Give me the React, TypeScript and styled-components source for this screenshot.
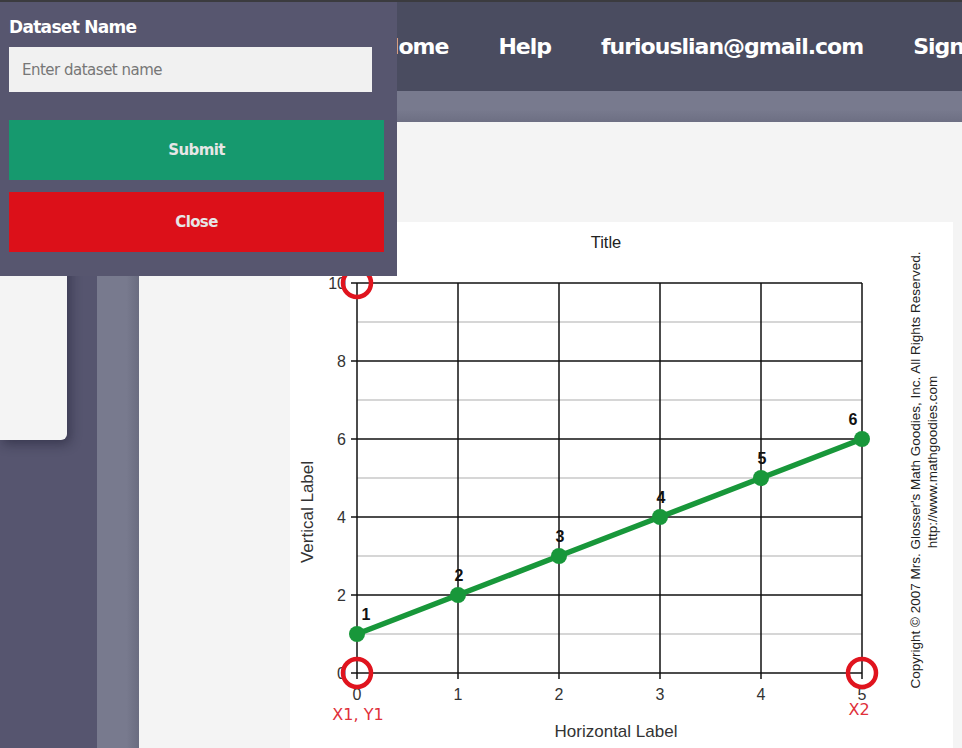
import React from "react";
import styled, { createGlobalStyle } from "styled-components";

const Global = createGlobalStyle`
  html, body { margin: 0; padding: 0; height: 100%; overflow: hidden; }
  body { font-family: "DejaVu Sans", "Liberation Sans", sans-serif; background: #f4f4f4; }
  #root { height: 100%; }
`;

const Page = styled.div`
  position: relative;
  display: flex;
  flex-direction: column;
  width: 962px;
  height: 748px;
  overflow: hidden;
`;

const NavBar = styled.nav`
  flex: 0 0 89px;
  display: flex;
  align-items: center;
  gap: 50px;
  padding-left: 381px;
  background: #4a4c60;
  border-top: 2px solid #3b3b3f;
  white-space: nowrap;
  overflow: hidden;
`;

const NavItem = styled.span`
  color: #ffffff;
  font-family: "DejaVu Sans", sans-serif;
  font-weight: 700;
  font-size: 22px;
  letter-spacing: -1px;
`;

const SubBar = styled.div`
  flex: 0 0 31px;
  background: linear-gradient(to bottom, #787a8e 0%, #787a8e 60%, #6d6f83 100%);
`;

const Body = styled.div`
  flex: 1;
  display: flex;
  min-height: 0;
`;

const Sidebar = styled.aside`
  flex: 0 0 97px;
  background: #56556f;
  padding-top: 10px;
`;

const SideCard = styled.div`
  width: 67px;
  height: 308px;
  background: #f4f4f4;
  border-radius: 0 0 6px 0;
  box-shadow: 3px 4px 12px rgba(20, 20, 40, 0.45);
`;

const Shade = styled.div`
  flex: 0 0 42px;
  background: linear-gradient(to right, #787a8e 0%, #787a8e 70%, #6a6c80 100%);
`;

const Content = styled.main`
  flex: 1;
  background: #f4f4f4;
  padding: 100px 9px 0 151px;
`;

const ChartSheet = styled.div`
  width: 663px;
  height: 526px;
  background: #ffffff;
`;

const Popup = styled.div`
  position: absolute;
  left: 0;
  top: 2px;
  width: 397px;
  height: 274px;
  box-sizing: border-box;
  background: #57566f;
  padding: 14px 13px 0 9px;
  display: flex;
  flex-direction: column;
`;

const PopupLabel = styled.label`
  color: #ffffff;
  font-family: "DejaVu Sans", sans-serif;
  font-weight: 700;
  font-size: 17px;
  letter-spacing: -0.7px;
  line-height: 22px;
  margin-bottom: 9px;
`;

const NameInput = styled.input`
  width: 363px;
  height: 45px;
  box-sizing: border-box;
  border: none;
  outline: none;
  background: #f1f1f1;
  padding: 0 13px;
  font-family: "DejaVu Sans", sans-serif;
  font-size: 15px;
  letter-spacing: -0.5px;
  color: #333;
  margin-bottom: 28px;
  &::placeholder { color: #777777; }
`;

const ActionButton = styled.button<{ $tone: "ok" | "danger" }>`
  width: 375px;
  height: 60px;
  border: none;
  margin-bottom: 12px;
  background: ${(p) => (p.$tone === "ok" ? "#16996e" : "#dc1019")};
  color: #e6e6e6;
  font-family: "DejaVu Sans", sans-serif;
  font-weight: 700;
  font-size: 15px;
  letter-spacing: -0.6px;
  cursor: pointer;
`;

const X0 = 67;
const Y0 = 451;
const DX = 101;
const DY = 39;
const xp = (v: number) => X0 + v * DX;
const yp = (v: number) => Y0 - v * DY;

const points = [1, 2, 3, 4, 5, 6].map((y, i) => ({ x: i, y, label: String(y) }));

function Chart() {
  const f = "'Liberation Sans', Arial, sans-serif";
  return (
    <svg width="663" height="526" viewBox="0 0 663 526">
      <text x="316" y="26" textAnchor="middle" fontFamily={f} fontSize="16.5" fill="#222">Title</text>
      {[1, 3, 5, 7, 9].map((v) => (
        <line key={"m" + v} x1={xp(0)} x2={xp(5)} y1={yp(v)} y2={yp(v)} stroke="#c8c8c8" strokeWidth="1.5" />
      ))}
      {[0, 2, 4, 6, 8, 10].map((v) => (
        <g key={"h" + v}>
          <line x1={xp(0) - 6} x2={xp(5)} y1={yp(v)} y2={yp(v)} stroke="#111" strokeWidth="1.5" />
          <text x={xp(0) - 11} y={yp(v) + 6} textAnchor="end" fontFamily={f} fontSize="16" fill="#333">{v}</text>
        </g>
      ))}
      {[0, 1, 2, 3, 4, 5].map((v) => (
        <g key={"v" + v}>
          <line x1={xp(v)} x2={xp(v)} y1={yp(10)} y2={yp(0) + 6} stroke="#111" strokeWidth="1.5" />
          <text x={xp(v)} y={yp(0) + 27} textAnchor="middle" fontFamily={f} fontSize="16" fill="#333">{v}</text>
        </g>
      ))}
      <polyline
        points={points.map((p) => `${xp(p.x)},${yp(p.y)}`).join(" ")}
        fill="none"
        stroke="#18973a"
        strokeWidth="5.5"
        strokeLinejoin="round"
      />
      {points.map((p) => (
        <g key={"p" + p.x}>
          <circle cx={xp(p.x)} cy={yp(p.y)} r="8" fill="#18973a" />
          <text
            x={p.x === 0 ? xp(0) + 9 : p.x === 5 ? xp(5) - 9 : xp(p.x) + 1}
            y={yp(p.y) - 14}
            textAnchor="middle"
            fontFamily={f}
            fontWeight="700"
            fontSize="16"
            fill="#111"
          >
            {p.label}
          </text>
        </g>
      ))}
      <text
        transform={`translate(23 290) rotate(-90)`}
        textAnchor="middle"
        fontFamily={f}
        fontSize="17"
        fill="#333"
      >
        Vertical Label
      </text>
      <text x="326" y="515" textAnchor="middle" fontFamily={f} fontSize="17" fill="#333">Horizontal Label</text>
      <text transform="translate(630 248) rotate(-90)" textAnchor="middle" fontFamily={f} fontSize="13.5" fill="#222">
        Copyright © 2007 Mrs. Glosser's Math Goodies, Inc. All Rights Reserved.
      </text>
      <text transform="translate(647 240) rotate(-90)" textAnchor="middle" fontFamily={f} fontSize="13.5" fill="#222">
        http://www.mathgoodies.com
      </text>
      {[
        [xp(0), yp(10)],
        [xp(0), yp(0)],
        [xp(5), yp(0)],
      ].map(([cx, cy], i) => (
        <circle key={"r" + i} cx={cx} cy={cy} r="14" fill="none" stroke="#e0141e" strokeWidth="4.5" />
      ))}
      <text x={xp(0) + 1} y="498" textAnchor="middle" fontFamily="'DejaVu Sans', sans-serif" fontSize="16" fill="#e0303a">X1, Y1</text>
      <text x={xp(5) - 3} y="493" textAnchor="middle" fontFamily="'DejaVu Sans', sans-serif" fontSize="16" fill="#e0303a">X2</text>
    </svg>
  );
}

export default function App() {
  return (
    <>
      <Global />
      <Page>
        <NavBar>
          <NavItem>Home</NavItem>
          <NavItem>Help</NavItem>
          <NavItem>furiouslian@gmail.com</NavItem>
          <NavItem>Sign Out</NavItem>
        </NavBar>
        <SubBar />
        <Body>
          <Sidebar>
            <SideCard />
          </Sidebar>
          <Shade />
          <Content>
            <ChartSheet>
              <Chart />
            </ChartSheet>
          </Content>
        </Body>
        <Popup>
          <PopupLabel htmlFor="ds-name">Dataset Name</PopupLabel>
          <NameInput id="ds-name" placeholder="Enter dataset name" />
          <ActionButton $tone="ok">Submit</ActionButton>
          <ActionButton $tone="danger">Close</ActionButton>
        </Popup>
      </Page>
    </>
  );
}
